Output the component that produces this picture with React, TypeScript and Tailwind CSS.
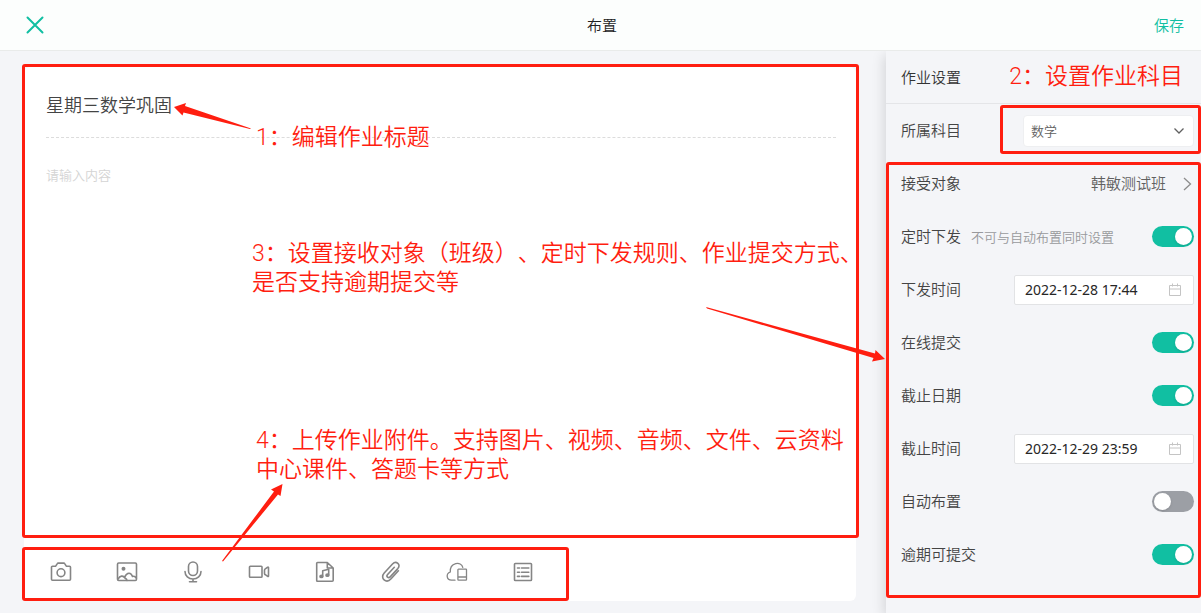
import React from 'react';

const ICONS = [
  {
    label: '拍照',
    art: (
      <>
        <path d="M1.500 6.200a1 1 0 0 1 1-1h3.200l1.600-2.600a1 1 0 0 1 .9-.5h5.600a1 1 0 0 1 .9.500l1.600 2.600h3.200a1 1 0 0 1 1 1v12.100a1 1 0 0 1-1 1h-17a1 1 0 0 1-1-1z" />
        <circle cx="11" cy="11.700" r="3.900" />
      </>
    ),
  },
  {
    label: '图片',
    art: (
      <>
        <rect x="1.500" y="2" width="19" height="17.500" rx="1.200" />
        <circle cx="7.500" cy="7.800" r="1.200" fill="currentColor" />
        <path d="M2 18.200c2-3.600 5-4.200 7-1.200 1.600 1 2 2 2 2.500M8.500 16.300c2.500-5.300 6.500-5.300 8-.8 1.800-.8 3 .2 3.800 1.700" />
      </>
    ),
  },
  {
    label: '音频',
    art: (
      <>
        <rect x="6.500" y="1" width="9" height="13.500" rx="4.500" />
        <path d="M3 10.500c0 4.500 3.500 7.500 8 7.500s8-3 8-7.500M11 18v2.700M7.500 20.700h7" />
      </>
    ),
  },
  {
    label: '视频',
    art: (
      <>
        <rect x="1.500" y="5.300" width="12.500" height="11" rx="0.800" />
        <path d="M16.500 9.200c0-.6.300-1 .8-1.300l2.400-1.700c.4-.3.800-.1.800.400v8.400c0 .5-.4.700-.8.400l-2.400-1.700c-.5-.3-.8-.7-.8-1.300z" />
      </>
    ),
  },
  {
    label: '音乐文件',
    art: (
      <>
        <path d="M3.500 1.500h9.800l5.900 5.500v12.300a1 1 0 0 1-1 1H3.500a.8.800 0 0 1-.8-.8V2.300a.8.800 0 0 1 .8-.8zM13.300 1.500V7h5.900" />
        <path d="M8.700 15.200V9.800l6-1.500v5.600" />
        <ellipse cx="7.400" cy="15.400" rx="1.400" ry="1.100" fill="currentColor" />
        <ellipse cx="13.400" cy="14.200" rx="1.400" ry="1.100" fill="currentColor" />
      </>
    ),
  },
  {
    label: '附件',
    art: (
      <path d="M14.300 6.300l-6.700 7.200c-1.800 2 .8 4.300 2.600 2.400l7.600-8.300c3.600-4.200-1.700-8.400-5.300-4.600l-8.300 9c-4.600 5.400 2.100 11 6.900 5.800l7.300-8" />
    ),
  },
  {
    label: '云资料',
    art: (
      <>
        <path d="M9 19.200H5.500c-5.200-.3-5.800-6.600-1.200-8.200C3.600 1.600 15.300-.2 16.800 6.300" strokeWidth="1.300" />
        <path d="M12.500 8.200h7.400a.6.600 0 0 1 .6.600v9.800a.6.600 0 0 1-.6.600h-7.400a.6.600 0 0 1-.6-.6V8.800a.6.600 0 0 1 .6-.6zM12 16h8.400" strokeWidth="1.300" />
      </>
    ),
  },
  {
    label: '答题卡',
    art: (
      <>
        <rect x="2.500" y="2.500" width="17" height="17" rx="0.800" />
        <path d="M5.500 7h2M9.500 7h7.300M5.500 11.200h2M9.500 11.200h7.300M5.500 15.400h2M9.500 15.400h7.300" />
      </>
    ),
  },
];

function Note({ className, children }: { className: string; children: React.ReactNode }) {
  return (
    <p
      className={`absolute pointer-events-none whitespace-nowrap font-['Roboto','Noto_Sans_CJK_SC',sans-serif] text-[23px] leading-[29px] text-[#ff1e10] [text-spacing-trim:space-all] ${className}`}
    >
      {children}
    </p>
  );
}

function Frame({ className }: { className: string }) {
  return <div className={`absolute pointer-events-none rounded-[3px] border-3 border-[#ff1e10] ${className}`} />;
}

function Arrow({ className, viewBox, points }: { className: string; viewBox: string; points: string }) {
  return (
    <svg className={`absolute pointer-events-none fill-[#ff1e10] ${className}`} viewBox={viewBox} aria-hidden="true">
      <polygon points={points} />
    </svg>
  );
}

function Row({ id, label, hint, children }: { id: string; label: string; hint?: string; children: React.ReactNode }) {
  return (
    <div className="flex h-[53px] items-center justify-between pl-[15px] pr-[7px]">
      <div className="flex items-center gap-2.5">
        <label htmlFor={id}>{label}</label>
        {hint && <span className="text-[13px] text-[#98999c]">{hint}</span>}
      </div>
      {children}
    </div>
  );
}

function Toggle({ id, on = false }: { id: string; on?: boolean }) {
  return (
    <input
      id={id}
      type="checkbox"
      role="switch"
      defaultChecked={on}
      className="h-[21px] w-[42px] cursor-pointer appearance-none rounded-full bg-[#9c9fa5] p-0.5 before:block before:size-[17px] before:rounded-full before:bg-white before:shadow-sm checked:bg-[#11bfa2] checked:before:ml-[21px]"
    />
  );
}

function DateField({ id, value }: { id: string; value: string }) {
  return (
    <div className="relative">
      <input
        id={id}
        type="text"
        defaultValue={value}
        className="block h-[30px] w-[180px] rounded-xs border border-[#e2e3e5] bg-white pl-2.5 pr-8 font-['Noto_Sans'] text-sm font-normal text-[#262626] outline-none"
      />
      <svg className="absolute right-3 top-2 size-3.5" viewBox="0 0 14 14" fill="none" stroke="#c4c4c4" aria-hidden="true">
        <path d="M1.500 2.500h11v10h-11zM1.500 6h11M4.500 .5v3M9.500 .5v3" />
      </svg>
    </div>
  );
}

function Editor() {
  return (
    <section className="relative z-10 ml-6 mr-[30px] mt-4 mb-3 flex flex-1 flex-col rounded-md bg-white">
      <div className="relative flex flex-1 flex-col pl-[22px] pr-5">
        <input
          type="text"
          aria-label="作业标题"
          defaultValue="星期三数学巩固"
          className="mt-1 h-[67px] border-b border-dashed border-[#dcdcdc] text-lg text-[#444] outline-none"
        />
        <textarea
          aria-label="作业内容"
          placeholder="请输入内容"
          className="flex-1 resize-none pt-7 text-[13px] leading-[18px] outline-none placeholder:text-[#d4d4d4]"
        />
        <Frame className="-left-0.5 -right-[3px] -top-[3px] bottom-0" />
      </div>
      <div className="relative flex h-[63px] items-start gap-11 pl-[26px] pt-[23px]">
        {ICONS.map((icon) => (
          <button key={icon.label} type="button" aria-label={icon.label} className="text-[#858585]">
            <svg
              className="size-[22px]"
              viewBox="0 0 22 22"
              fill="none"
              stroke="currentColor"
              strokeWidth="1.600"
              strokeLinecap="round"
              strokeLinejoin="round"
            >
              {icon.art}
            </svg>
          </button>
        ))}
        <Frame className="-left-0.5 bottom-0 top-[9px] w-[547px]" />
      </div>

      <Note className="left-[232px] top-[56px]">1：编辑作业标题</Note>
      <Note className="left-[228px] top-[172px]">
        3：设置接收对象（班级）、定时下发规则、作业提交方式、
        <br />
        是否支持逾期提交等
      </Note>
      <Note className="left-[232px] top-[359px]">
        4：上传作业附件。支持图片、视频、音频、文件、云资料
        <br />
        中心课件、答题卡等方式
      </Note>

      <Arrow
        className="left-[146px] top-[33px] h-[33px] w-[90px]"
        viewBox="170 100 90 33"
        points="174,107 186,103 185,106 251,128.500 250,129 183.500,112.500 182.500,115.500"
      />
      <Arrow
        className="-right-[34px] top-[233px] h-[70px] w-[190px]"
        viewBox="700 300 190 70"
        points="885,359 875.500,350 875,353.500 706,307 707,308.500 873.500,358 872,361.500"
      />
      <Arrow
        className="left-[196px] top-[413px] h-[90px] w-[70px]"
        viewBox="220 480 70 90"
        points="282.500,484 280.500,496 278,494.500 223,561.500 222,561 274,491.500 271,489.500"
      />
    </section>
  );
}

function Settings() {
  return (
    <aside className="relative w-[315px] bg-[#f4f5f8] shadow-[-2px_4px_12px_rgba(0,0,0,0.13)]">
      <div className="flex h-[53px] items-center justify-between border-b border-[#e4e5e8] pl-[15px]">
        <h2 className="text-[#333]">作业设置</h2>
      </div>
      <Row id="subject" label="所属科目">
        <div className="relative">
          <select
            id="subject"
            className="block h-8 w-[171px] appearance-none rounded-sm border border-[#eeeff1] bg-white pl-[7px] text-[13px] text-[#606060] outline-none"
          >
            <option>数学</option>
          </select>
          <svg className="absolute right-[9px] top-2.5 size-3" viewBox="0 0 12 12" fill="none" stroke="#606060" strokeWidth="1.300" aria-hidden="true">
            <path d="M1.500 3.500L6 8l4.500-4.500" />
          </svg>
        </div>
      </Row>
      <Row id="target" label="接受对象">
        <button id="target" type="button" className="flex items-center gap-4 text-[#606060]">
          韩敏测试班
          <svg className="h-3.5 w-3" viewBox="0 0 12 14" fill="none" stroke="#8c8c8c" strokeWidth="1.300" aria-hidden="true">
            <path d="M2 1l6.500 6L2 13" />
          </svg>
        </button>
      </Row>
      <Row id="timed" label="定时下发" hint="不可与自动布置同时设置">
        <Toggle id="timed" on />
      </Row>
      <Row id="send-time" label="下发时间">
        <DateField id="send-time" value="2022-12-28 17:44" />
      </Row>
      <Row id="online" label="在线提交">
        <Toggle id="online" on />
      </Row>
      <Row id="deadline" label="截止日期">
        <Toggle id="deadline" on />
      </Row>
      <Row id="end-time" label="截止时间">
        <DateField id="end-time" value="2022-12-29 23:59" />
      </Row>
      <Row id="auto" label="自动布置">
        <Toggle id="auto" />
      </Row>
      <Row id="late" label="逾期可提交">
        <Toggle id="late" on />
      </Row>

      <Note className="right-[18px] top-[11px]">2：设置作业科目</Note>
      <Frame className="right-0 top-[54px] h-[49px] w-[201px]" />
      <Frame className="inset-x-0 top-[111px] bottom-[15px]" />
    </aside>
  );
}

function App() {
  return (
    <div className="flex min-h-screen flex-col bg-[#f4f5f8] font-['Noto_Sans_CJK_SC',sans-serif] text-[15px] font-[350] text-[#444]">
      <header className="relative z-10 grid h-[51px] grid-cols-3 items-center border-b border-[#e9ebea] bg-[#fcfefd] pl-5 pr-[17px]">
        <button type="button" aria-label="关闭" className="ml-1.5 justify-self-start">
          <svg className="size-[18px]" viewBox="0 0 18 18" fill="none" stroke="#11bfa2" strokeWidth="2" strokeLinecap="round">
            <path d="M1.500 1.500l15 15M16.500 1.500l-15 15" />
          </svg>
        </button>
        <h1 className="justify-self-center text-[#222]">布置</h1>
        <button type="button" className="justify-self-end text-[#11bfa2]">
          保存
        </button>
      </header>
      <main className="flex flex-1">
        <Editor />
        <Settings />
      </main>
    </div>
  );
}

export default App;
